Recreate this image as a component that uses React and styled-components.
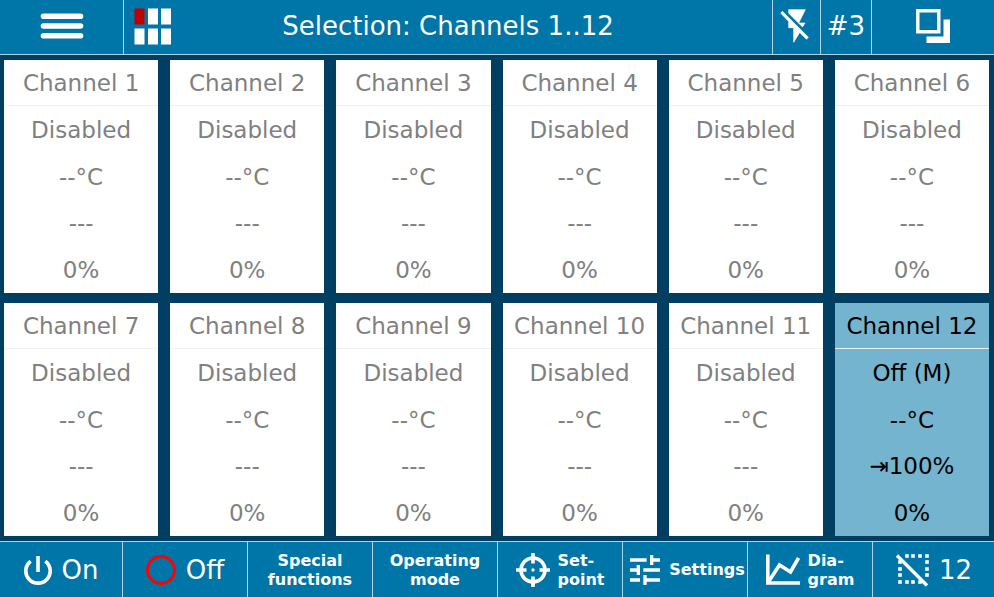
import React, { useState } from "react";
import styled, { createGlobalStyle } from "styled-components";
import { MdTune } from "react-icons/md";

const BAR = "#0075a7";
const FRAME = "#003f62";
const LINE = "#b4d3e2";

const GlobalStyle = createGlobalStyle`
  * {
    box-sizing: border-box;
  }

  body {
    margin: 0;
    background: ${FRAME};
    font-family: "DejaVu Sans", sans-serif;
  }
`;

const Screen = styled.div`
  display: flex;
  flex-direction: column;
  min-height: 100vh;
`;

const Bar = styled.div`
  display: grid;
  background: ${BAR};
`;

const BarButton = styled.button`
  display: flex;
  align-items: center;
  justify-content: center;
  gap: ${({ $gap }) => $gap || 8}px;
  min-width: 0;
  padding: 0;
  border: 0;
  background: none;
  color: #fff;
  font-family: inherit;
  font-size: 26px;
  cursor: pointer;

  & + & {
    border-left: 1px solid ${LINE};
  }

  svg {
    flex: none;
  }
`;

const Header = styled(Bar).attrs({ as: "header" })`
  grid-template-columns: 123fr 649fr 48fr 51fr 123fr;
  height: 55px;
  border-bottom: 1px solid ${LINE};

  ${BarButton} {
    padding-bottom: 2px;
  }
`;

const Footer = styled(Bar).attrs({ as: "footer" })`
  grid-template-columns: 122fr repeat(6, 125fr) 122fr;
  height: 56px;
  border-top: 1px solid ${LINE};
`;

const SelectionButton = styled(BarButton)`
  display: grid;
  grid-template-columns: 38px 1fr 38px;
  padding: 0 10px;
  border-left: 1px solid ${LINE};
`;

const SmallLabel = styled.span`
  font-size: 16px;
  font-weight: bold;
  line-height: 19px;
  text-align: ${({ $align }) => $align || "center"};
`;

const ChannelGrid = styled.main`
  flex: 1;
  display: grid;
  grid-template-columns: repeat(6, 1fr);
  grid-auto-rows: 1fr;
  gap: 10px 12px;
  padding: 5px 5px 5px 4px;
`;

const Card = styled.button`
  display: flex;
  flex-direction: column;
  min-width: 0;
  padding: 0;
  border: 0;
  background: ${({ $selected }) => ($selected ? "#74b4ce" : "#fff")};
  color: ${({ $selected }) => ($selected ? "#000" : "#808080")};
  font-family: inherit;
  font-size: 23px;
  line-height: 28px;
  cursor: pointer;
`;

const CardTitle = styled.span`
  display: flex;
  align-items: center;
  justify-content: center;
  width: 100%;
  height: 46px;
  border-bottom: 1px solid #f0f0f0;
`;

const CardRow = styled.span`
  flex: 1;
  display: flex;
  align-items: center;
  justify-content: center;
  width: 100%;
  padding-top: 1px;
`;

function MenuIcon() {
  return (
    <svg width="44" height="26" viewBox="0 0 44 26" aria-hidden="true">
      <g stroke="#fff" strokeWidth="5.6" strokeLinecap="round">
        <path d="M3.500 3.300h37M3.500 13h37M3.500 22.700h37" />
      </g>
    </svg>
  );
}

function ChannelsIcon() {
  return (
    <svg width="38" height="37" viewBox="0 0 38 37" aria-hidden="true">
      <path
        fill="#fff"
        d="M14 0.500h10v16h-10zM27 0.500h10v16h-10zM0.500 20.500h10v16h-10zM14 20.500h10v16h-10zM27 20.500h10v16h-10z"
      />
      <path fill="#c00000" d="M0.500 0.500h10v16h-10z" />
    </svg>
  );
}

function FlashOffIcon() {
  return (
    <svg width="40" height="40" viewBox="0 0 24 24" aria-hidden="true">
      <path
        fill="#fff"
        stroke="#fff"
        strokeWidth="0.4"
        d="M3.270 3.200L2.200 4.270l4.800 5V13h3v8.800l3.580-5.940 4.150 4.150 1.070-1.270zM16.800 10.200h-3.800l4-8H7v2.100l8.300 8.300z"
      />
    </svg>
  );
}

function WindowsIcon() {
  return (
    <svg width="34" height="34" viewBox="0 0 34 34" aria-hidden="true">
      <path d="M1.800 1.800h21v21h-21z" fill="none" stroke="#fff" strokeWidth="3.4" />
      <path d="M27.500 10.500H34V34H10.500v-6.500h17z" fill="#fff" />
    </svg>
  );
}

function PowerIcon() {
  return (
    <svg width="28" height="30" viewBox="0 0 28 30" aria-hidden="true">
      <g fill="none" stroke="#fff" strokeWidth="3.6">
        <path d="M14 1v16" />
        <path d="M6.700 6.200a12.200 12.200 0 1 0 14.600 0" />
      </g>
    </svg>
  );
}

function OffIcon() {
  return (
    <svg width="30" height="30" viewBox="0 0 30 30" aria-hidden="true">
      <circle cx="15" cy="15" r="13.500" fill="none" stroke="#f00" strokeWidth="3" />
    </svg>
  );
}

function TargetIcon() {
  return (
    <svg width="34" height="34" viewBox="0 0 34 34" aria-hidden="true">
      <g fill="none" stroke="#fff" strokeWidth="3.6">
        <circle cx="17" cy="17" r="12" />
        <path d="M17 0v10.500M17 23.500V34M0 17h10.500M23.500 17H34" />
      </g>
      <circle cx="17" cy="17" r="1.700" fill="#fff" />
    </svg>
  );
}

function DiagramIcon() {
  return (
    <svg width="34" height="32" viewBox="0 0 34 32" aria-hidden="true">
      <g fill="none" stroke="#fff" strokeWidth="3.6">
        <path d="M1.800 0.500v28.500H34" />
        <path d="M2 28.500L13.500 11l11 7L32.500 4" />
      </g>
    </svg>
  );
}

const dots = [
  [12, 3], [18, 3], [25, 3], [32, 3],
  [32, 9], [32, 16], [32, 22],
  [5, 9], [5, 16], [5, 22], [5, 29],
  [12, 29], [18, 29], [25, 29]
];

function DeselectIcon() {
  return (
    <svg width="34" height="34" viewBox="0 0 34 34" aria-hidden="true">
      {dots.map(([x, y]) => (
        <rect key={`${x}-${y}`} x={x - 1.8} y={y - 1.8} width="3.6" height="3.6" fill="#fff" />
      ))}
      <path d="M2 2.500L32 32.500" stroke="#fff" strokeWidth="3.4" />
    </svg>
  );
}

const channels = Array.from({ length: 12 }, (_, i) =>
  i === 11
    ? { id: 12, values: ["Off (M)", "--°C", "⇥100%", "0%"] }
    : { id: i + 1, values: ["Disabled", "--°C", "---", "0%"] }
);

function Channel({ channel, selected, onSelect }) {
  return (
    <Card type="button" $selected={selected} aria-pressed={selected} onClick={onSelect}>
      <CardTitle>Channel {channel.id}</CardTitle>
      {channel.values.map((value, i) => (
        <CardRow key={i}>{value}</CardRow>
      ))}
    </Card>
  );
}

function App() {
  const [selected, setSelected] = useState(12);

  return (
    <Screen>
      <GlobalStyle />
      <Header>
        <BarButton type="button" aria-label="Menu">
          <MenuIcon />
        </BarButton>
        <SelectionButton type="button">
          <ChannelsIcon />
          <span>Selection: Channels 1..12</span>
        </SelectionButton>
        <BarButton type="button" aria-label="Flash off">
          <FlashOffIcon />
        </BarButton>
        <BarButton type="button">#3</BarButton>
        <BarButton type="button" aria-label="Windows">
          <WindowsIcon />
        </BarButton>
      </Header>
      <ChannelGrid>
        {channels.map(channel => (
          <Channel
            key={channel.id}
            channel={channel}
            selected={channel.id === selected}
            onSelect={() => setSelected(channel.id)}
          />
        ))}
      </ChannelGrid>
      <Footer>
        <BarButton type="button" $gap={10}>
          <PowerIcon />
          On
        </BarButton>
        <BarButton type="button" $gap={10}>
          <OffIcon />
          Off
        </BarButton>
        <BarButton type="button">
          <SmallLabel>
            Special
            <br />
            functions
          </SmallLabel>
        </BarButton>
        <BarButton type="button">
          <SmallLabel>
            Operating
            <br />
            mode
          </SmallLabel>
        </BarButton>
        <BarButton type="button">
          <TargetIcon />
          <SmallLabel $align="left">
            Set-
            <br />
            point
          </SmallLabel>
        </BarButton>
        <BarButton type="button" $gap={4}>
          <MdTune size={40} />
          <SmallLabel>Settings</SmallLabel>
        </BarButton>
        <BarButton type="button">
          <DiagramIcon />
          <SmallLabel $align="left">
            Dia-
            <br />
            gram
          </SmallLabel>
        </BarButton>
        <BarButton type="button" $gap={10}>
          <DeselectIcon />
          12
        </BarButton>
      </Footer>
    </Screen>
  );
}

export default App;
